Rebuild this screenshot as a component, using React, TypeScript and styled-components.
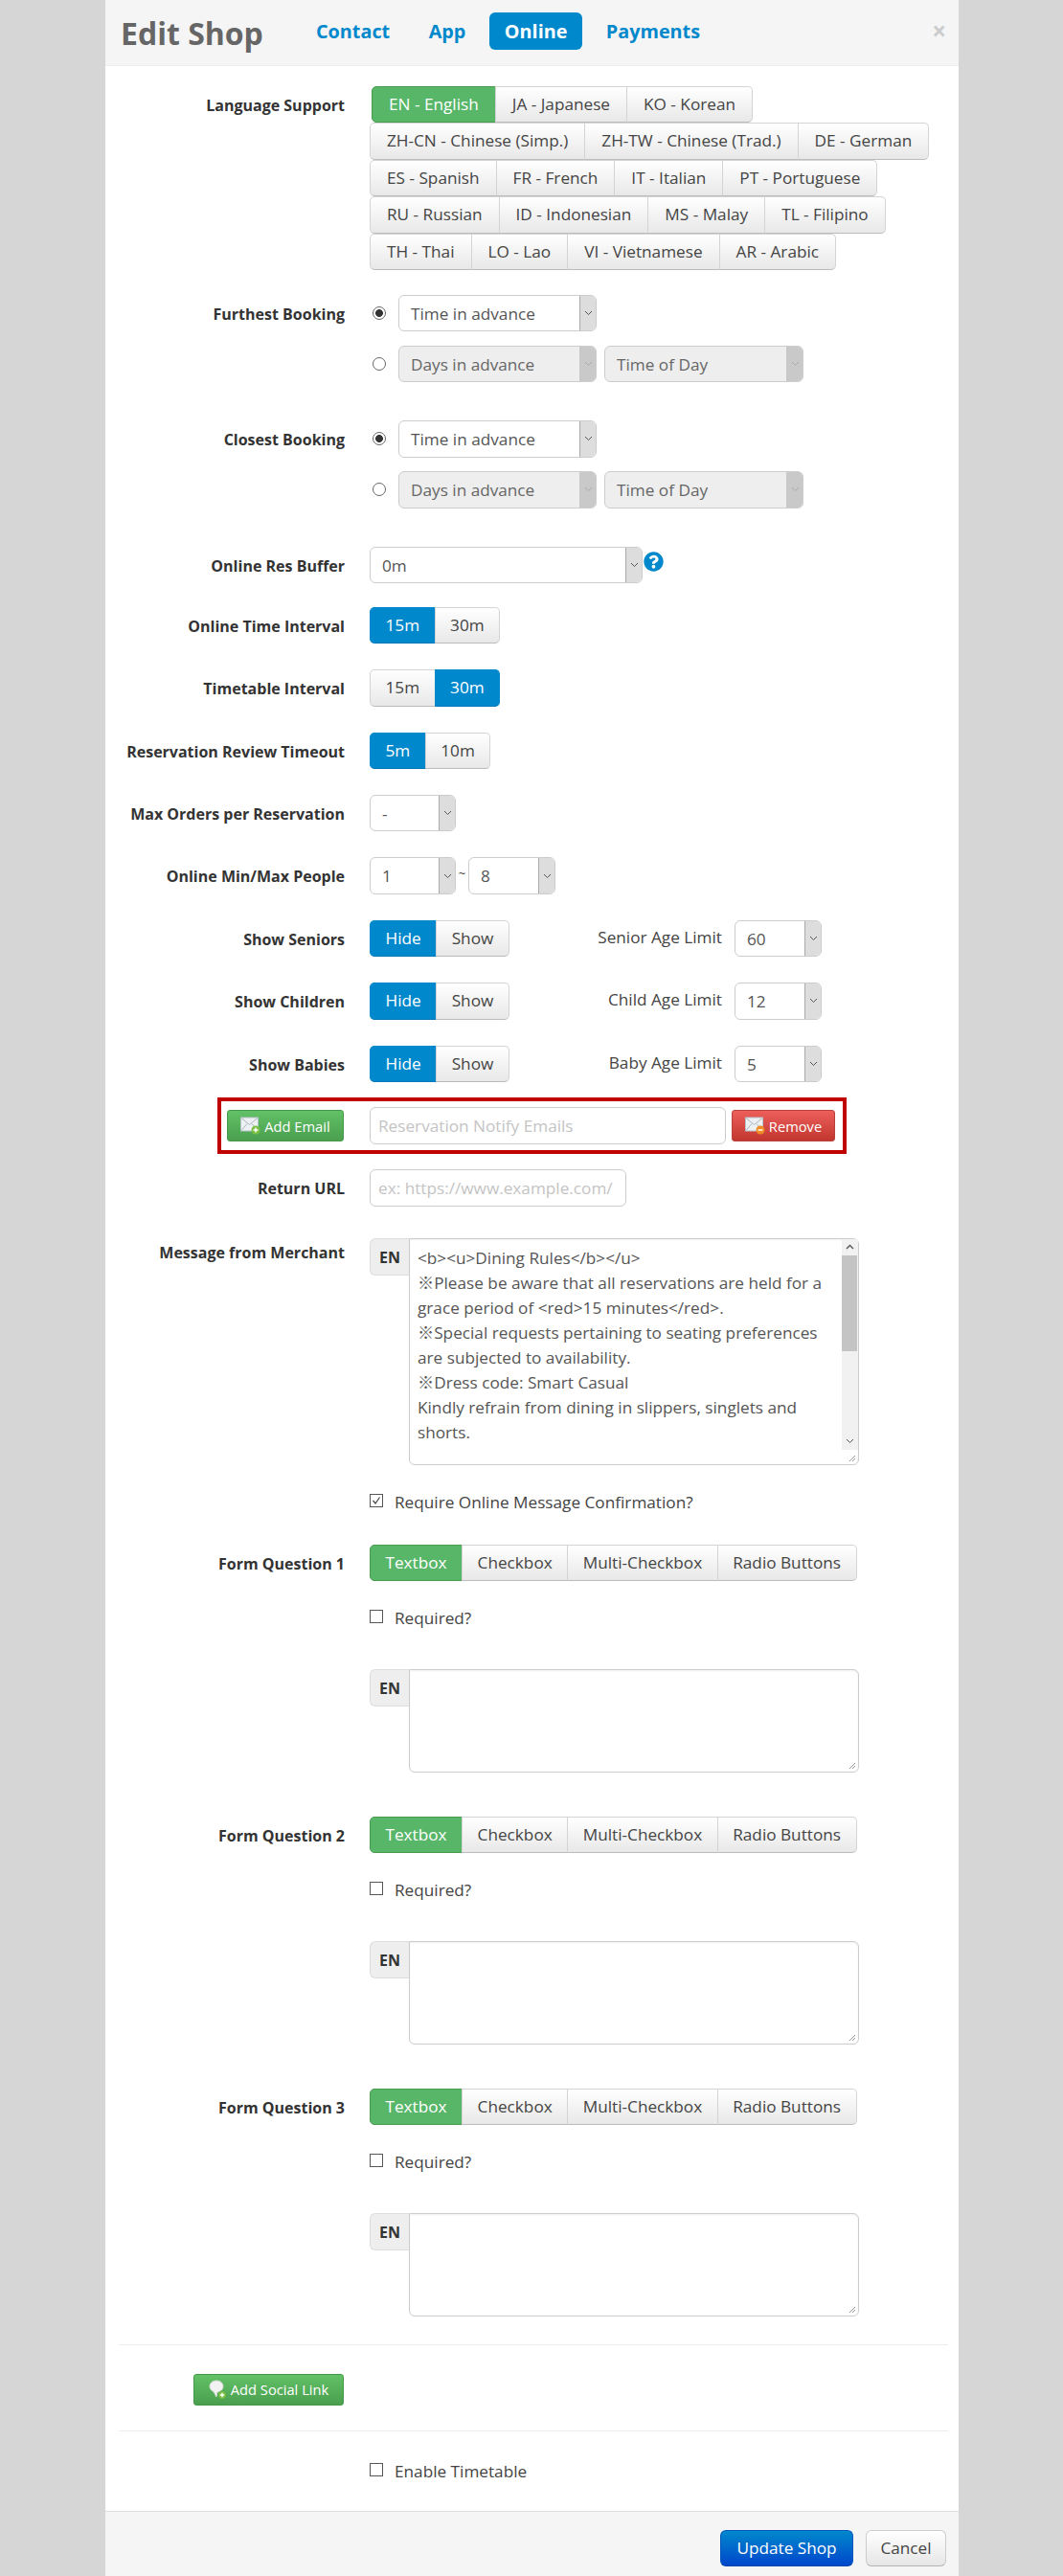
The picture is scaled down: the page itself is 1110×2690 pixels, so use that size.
import React from 'react';
import styled, { createGlobalStyle } from 'styled-components';
import { FaQuestionCircle } from 'react-icons/fa';

const fontStack = '"Open Sans", "Noto Sans CJK JP", "Liberation Sans", sans-serif';

const GlobalStyle = createGlobalStyle`
  html, body {
    margin: 0;
    padding: 0;
    background: #d6d6d6;
  }
  * {
    box-sizing: border-box;
  }
  body {
    font-family: ${fontStack};
    font-size: 17.2px;
    color: #444;
  }
`;

const Page = styled.div`
  width: 1110px;
  height: 2690px;
  overflow: hidden;
  padding-left: 110px;
`;

const Modal = styled.div`
  width: 891px;
  height: 2690px;
  background: #fff;
  display: flex;
  flex-direction: column;
`;

const Header = styled.header`
  height: 69px;
  flex: none;
  background: #f5f5f5;
  border-bottom: 1px solid #eee;
  display: flex;
  align-items: center;
  padding-left: 16px;
  padding-right: 16px;
`;

const Title = styled.h1`
  margin: 2px 38px 0 0;
  font-size: 32px;
  line-height: 40px;
  font-weight: 700;
  color: #666;
  width: 150px;
  white-space: nowrap;
`;

const Tabs = styled.nav`
  display: flex;
  align-items: center;
  gap: 8.5px;
  flex: 1;
`;

const Tab = styled.a<{ $active?: boolean }>`
  height: 39px;
  line-height: 39px;
  margin-top: -3px;
  padding: 0 16px;
  border-radius: 6px;
  font-size: 19.8px;
  font-weight: 700;
  color: ${p => (p.$active ? '#fff' : '#0088cc')};
  background: ${p => (p.$active ? '#0088cc' : 'transparent')};
`;

const Close = styled.span`
  font-size: 26px;
  font-weight: 700;
  color: #ccc;
  margin-top: -4px;
  margin-right: -3px;
`;

const Body = styled.div`
  flex: 1;
  padding-top: 21px;
`;

const Row = styled.div<{ $mt?: number }>`
  display: flex;
  align-items: flex-start;
  margin-top: ${p => p.$mt ?? 0}px;
`;

const Label = styled.label<{ $tight?: boolean }>`
  width: 250px;
  flex: none;
  height: 38px;
  line-height: ${p => (p.$tight ? 30 : 40)}px;
  text-align: right;
  font-weight: 700;
  font-size: 16px;
  color: #333;
  margin-right: 26px;
  white-space: nowrap;
`;

const Controls = styled.div`
  display: flex;
  flex-direction: column;
`;

const LangRow = styled.div<{ $first?: boolean }>`
  display: flex;
  height: 38.4px;
  margin-left: ${p => (p.$first ? 2 : 0)}px;
`;

const SegButton = styled.span<{ $on?: 'green' | 'blue'; $pad?: number }>`
  display: block;
  height: 100%;
  line-height: 35px;
  padding: 0 ${p => p.$pad ?? 17}px;
  white-space: nowrap;
  color: ${p => (p.$on ? '#fff' : '#444')};
  border: 1px solid ${p => (p.$on === 'green' ? '#4a9a4e' : p.$on === 'blue' ? '#0088cc' : '#d4d4d4')};
  border-bottom-color: ${p => (p.$on === 'green' ? '#4a9a4e' : p.$on === 'blue' ? '#0078b8' : '#bbb')};
  margin-left: -1px;
  background: ${p =>
    p.$on === 'green'
      ? '#57b668'
      : p.$on === 'blue'
        ? '#0088cc'
        : 'linear-gradient(#ffffff, #e8e8e8)'};
  &:first-child {
    margin-left: 0;
    border-radius: 5px 0 0 5px;
  }
  &:last-child {
    border-radius: 0 5px 5px 0;
  }
`;

const SegGroup = styled.div<{ $w?: number }>`
  display: flex;
  height: 38.4px;
  flex: none;
  width: ${p => (p.$w ? `${p.$w}px` : 'auto')};
`;

const BookingLine = styled.div<{ $mt?: number }>`
  display: flex;
  align-items: center;
  gap: 8px;
  height: 38.4px;
  margin-top: ${p => p.$mt ?? 0}px;
`;

const Radio = styled.span<{ $checked?: boolean }>`
  width: 14px;
  height: 14px;
  flex: none;
  margin-left: 3px;
  margin-right: 5px;
  border-radius: 50%;
  border: 1px solid #666;
  background: ${p => (p.$checked ? 'radial-gradient(circle, #333 0 3.6px, #fff 4.2px)' : '#fff')};
`;

const SelectBox = styled.div<{ $w: number; $disabled?: boolean }>`
  width: ${p => p.$w}px;
  height: 38.4px;
  flex: none;
  display: flex;
  border: 1px solid #ccc;
  border-radius: 6px;
  overflow: hidden;
  background: ${p => (p.$disabled ? '#eeeeee' : '#fff')};
  color: ${p => (p.$disabled ? '#666' : '#555')};
`;

const SelectValue = styled.span`
  flex: 1;
  line-height: 37px;
  padding-left: 12px;
  white-space: nowrap;
  overflow: hidden;
`;

const SelectArrow = styled.span<{ $disabled?: boolean }>`
  width: 17px;
  flex: none;
  display: flex;
  align-items: center;
  justify-content: center;
  background: ${p => (p.$disabled ? '#c9c9c9' : '#dddddd')};
  border-left: 1px solid ${p => (p.$disabled ? '#c9c9c9' : '#aaa')};
  color: ${p => (p.$disabled ? '#aaa' : '#555')};
`;

const Tilde = styled.span`
  width: 13px;
  text-align: center;
  line-height: 34px;
  font-size: 13px;
`;

const HelpIcon = styled.span`
  color: #0088cc;
  display: flex;
  height: 38px;
  align-items: center;
  margin-left: 1px;
  font-size: 21px;
  margin-top: -3px;
`;

const AgeLabel = styled.span`
  width: 223px;
  flex: none;
  text-align: right;
  line-height: 36px;
  margin-right: 13px;
  color: #444;
`;

const NotifyBox = styled.div`
  margin-top: 16px;
  margin-left: 117px;
  width: 657px;
  height: 59px;
  border: 4px solid #c00000;
  display: flex;
  align-items: center;
  padding-left: 6px;
`;

const IconButton = styled.span<{ $red?: boolean; $w: number; $ml?: number }>`
  width: ${p => p.$w}px;
  margin-left: ${p => p.$ml ?? 0}px;
  height: 33px;
  flex: none;
  display: flex;
  align-items: center;
  justify-content: center;
  gap: 4px;
  border-radius: 3px;
  font-size: 14.7px;
  color: #fff;
  white-space: nowrap;
  border: 1px solid ${p => (p.$red ? '#b9403b' : '#46994b')};
  background: ${p =>
    p.$red ? 'linear-gradient(#ec5f5b, #c2362f)' : 'linear-gradient(#62c166, #4a9f4f)'};
`;

const TextInput = styled.input<{ $w: number; $ml?: number }>`
  width: ${p => p.$w}px;
  height: 39px;
  flex: none;
  margin-left: ${p => p.$ml ?? 0}px;
  padding: 0 8px;
  border: 1px solid #ccc;
  border-radius: 6px;
  font-family: ${fontStack};
  font-size: 17.2px;
  outline: none;
  &::placeholder {
    color: #c4c4c4;
    opacity: 1;
  }
`;

const TextAreaGroup = styled.div`
  display: flex;
  align-items: flex-start;
`;

const LangAddon = styled.span`
  width: 41px;
  height: 39px;
  flex: none;
  line-height: 38px;
  text-align: center;
  font-weight: 700;
  font-size: 16px;
  color: #333;
  background: #eeeeee;
  border: 1px solid #ddd;
  border-right: none;
  border-radius: 6px 0 0 6px;
`;

const TextArea = styled.div<{ $h: number }>`
  position: relative;
  width: 470px;
  height: ${p => p.$h}px;
  display: flex;
  border: 1px solid #ccc;
  border-radius: 0 6px 6px 6px;
  box-shadow: inset 0 1px 2px rgba(0, 0, 0, 0.06);
`;

const AreaText = styled.div`
  flex: 1;
  padding: 7px 10px 0 8px;
  line-height: 26px;
  color: #555;
`;

const ScrollBar = styled.div`
  width: 17px;
  height: 220px;
  flex: none;
  background: #f1f1f1;
  display: flex;
  flex-direction: column;
  align-items: center;
  justify-content: space-between;
  color: #555;
  padding: 5px 0 6px;
`;

const ScrollThumb = styled.div`
  position: absolute;
  right: 1px;
  top: 17px;
  width: 16px;
  height: 100px;
  background: #c4c4c4;
`;

const Grip = styled.svg`
  position: absolute;
  right: 2px;
  bottom: 2px;
`;

const CheckLine = styled.div<{ $mt?: number }>`
  display: flex;
  align-items: center;
  height: 20px;
  margin-top: ${p => p.$mt ?? 0}px;
  margin-left: 276px;
  gap: 12px;
`;

const CheckBox = styled.span`
  width: 14px;
  height: 14px;
  flex: none;
  margin-top: -3px;
  border: 1px solid #555;
  background: #fff;
  display: flex;
  align-items: center;
  justify-content: center;
`;

const AreaLine = styled.div<{ $mt?: number }>`
  margin-left: 276px;
  margin-top: ${p => p.$mt ?? 0}px;
`;

const Divider = styled.hr<{ $mt: number }>`
  margin: ${p => p.$mt}px 11px 0 14px;
  border: none;
  border-top: 1px solid #eee;
`;

const SocialRow = styled.div`
  margin-top: 30px;
  margin-left: 92px;
`;

const Footer = styled.footer`
  height: 68px;
  flex: none;
  background: #f5f5f5;
  border-top: 1px solid #ddd;
  display: flex;
  justify-content: flex-end;
  gap: 13px;
  padding: 19px 13px 0 0;
`;

const FooterButton = styled.span<{ $primary?: boolean; $w: number }>`
  width: ${p => p.$w}px;
  height: 38px;
  line-height: 36px;
  text-align: center;
  border-radius: 6px;
  color: ${p => (p.$primary ? '#fff' : '#444')};
  border: 1px solid ${p => (p.$primary ? '#0055bb' : '#ccc')};
  border-bottom-color: ${p => (p.$primary ? '#0044aa' : '#b3b3b3')};
  background: ${p =>
    p.$primary ? 'linear-gradient(#0088cc, #0047cc)' : 'linear-gradient(#ffffff, #e6e6e6)'};
`;

const languages = [
  ['EN - English', 'JA - Japanese', 'KO - Korean'],
  ['ZH-CN - Chinese (Simp.)', 'ZH-TW - Chinese (Trad.)', 'DE - German'],
  ['ES - Spanish', 'FR - French', 'IT - Italian', 'PT - Portuguese'],
  ['RU - Russian', 'ID - Indonesian', 'MS - Malay', 'TL - Filipino'],
  ['TH - Thai', 'LO - Lao', 'VI - Vietnamese', 'AR - Arabic'],
];

const Chevron: React.FC = () => (
  <svg width="9" height="6" viewBox="0 0 9 6" fill="none" stroke="currentColor" strokeWidth="1">
    <path d="M1 1l3.5 3.5L8 1" />
  </svg>
);

const Select: React.FC<{ w: number; value: string; disabled?: boolean }> = ({ w, value, disabled }) => (
  <SelectBox $w={w} $disabled={disabled}>
    <SelectValue>{value}</SelectValue>
    <SelectArrow $disabled={disabled}>
      <Chevron />
    </SelectArrow>
  </SelectBox>
);

const Toggle: React.FC<{ left: string; right: string; on: 0 | 1; w?: number }> = ({ left, right, on, w }) => (
  <SegGroup $w={w}>
    <SegButton $on={on === 0 ? 'blue' : undefined} $pad={15.5}>
      {left}
    </SegButton>
    <SegButton $on={on === 1 ? 'blue' : undefined} $pad={15.5}>
      {right}
    </SegButton>
  </SegGroup>
);

const MailIcon: React.FC<{ badge: string; minus?: boolean }> = ({ badge, minus }) => (
  <svg width="21" height="19" viewBox="0 0 21 19">
    <rect x="0.5" y="1" width="18" height="14" fill="#eef1f3" stroke="#b8c4cc" />
    <path d="M1 1.5l8.5 7 8.5-7M1 14.5l6-7M18 14.5l-6-7" fill="none" stroke="#a9b6bf" />
    <circle cx="16" cy="14" r="4.5" fill={badge} />
    <path d={minus ? 'M13.5 14h5' : 'M13.5 14h5M16 11.5v5'} stroke="#fff" strokeWidth="1.4" />
  </svg>
);

const BubbleIcon: React.FC = () => (
  <svg width="19" height="21" viewBox="0 0 19 21">
    <path d="M8 1c4 0 7 2.4 7 6s-3 6-6 6l-1 5-3-5.6C2.500 11.400 1 9.500 1 7c0-3.600 3-6 7-6z" fill="#f2f2f2" stroke="#cfd8cf" />
    <circle cx="14" cy="16" r="4.200" fill="#7ac143" stroke="#4a9f4f" strokeWidth="0.5" />
    <path d="M11.800 16h4.400M14 13.800v4.400" stroke="#fff" strokeWidth="1.300" />
  </svg>
);

const Check: React.FC<{ checked?: boolean; children: React.ReactNode; mt?: number }> = ({ checked, children, mt }) => (
  <CheckLine $mt={mt}>
    <CheckBox>
      {checked && (
        <svg width="10" height="10" viewBox="0 0 10 10" fill="none" stroke="#444" strokeWidth="1.2">
          <path d="M1.500 5l2.500 3 4.500-6.500" />
        </svg>
      )}
    </CheckBox>
    <span>{children}</span>
  </CheckLine>
);

const Booking: React.FC<{ label: string; mt: number }> = ({ label, mt }) => (
  <Row $mt={mt}>
    <Label>{label}</Label>
    <Controls>
      <BookingLine>
        <Radio $checked />
        <Select w={207} value="Time in advance" />
      </BookingLine>
      <BookingLine $mt={14.5}>
        <Radio />
        <Select w={207} value="Days in advance" disabled />
        <Select w={208} value="Time of Day" disabled />
      </BookingLine>
    </Controls>
  </Row>
);

const AgeRow: React.FC<{ label: string; age: string; value: string }> = ({ label, age, value }) => (
  <Row $mt={27}>
    <Label>{label}</Label>
    <Toggle left="Hide" right="Show" on={0} w={145} />
    <AgeLabel>{age}</AgeLabel>
    <Select w={91} value={value} />
  </Row>
);

const FormQuestion: React.FC<{ n: number; mt: number }> = ({ n, mt }) => (
  <>
    <Row $mt={mt}>
      <Label>Form Question {n}</Label>
      <SegGroup>
        <SegButton $on="green" $pad={15.5}>
          Textbox
        </SegButton>
        <SegButton $pad={15.5}>Checkbox</SegButton>
        <SegButton $pad={15.5}>Multi-Checkbox</SegButton>
        <SegButton $pad={15.5}>Radio Buttons</SegButton>
      </SegGroup>
    </Row>
    <Check mt={28.5}>Required?</Check>
    <AreaLine $mt={43}>
      <TextAreaGroup>
        <LangAddon>EN</LangAddon>
        <TextArea $h={108}>
          <Grip width="9" height="9" viewBox="0 0 9 9" stroke="#999">
            <path d="M8 2L2 8M8 5L5 8" />
          </Grip>
        </TextArea>
      </TextAreaGroup>
    </AreaLine>
  </>
);

export default function App() {
  return (
    <Page>
      <GlobalStyle />
      <Modal>
        <Header>
          <Title>Edit Shop</Title>
          <Tabs>
            <Tab>Contact</Tab>
            <Tab>App</Tab>
            <Tab $active>Online</Tab>
            <Tab>Payments</Tab>
          </Tabs>
          <Close>×</Close>
        </Header>
        <Body>
          <Row>
            <Label>Language Support</Label>
            <Controls>
              {languages.map((row, i) => (
                <LangRow key={row[0]} $first={i === 0}>
                  {row.map((lang, j) => (
                    <SegButton key={lang} $on={i === 0 && j === 0 ? 'green' : undefined}>
                      {lang}
                    </SegButton>
                  ))}
                </LangRow>
              ))}
            </Controls>
          </Row>

          <Booking label="Furthest Booking" mt={26} />
          <Booking label="Closest Booking" mt={40} />

          <Row $mt={40}>
            <Label>Online Res Buffer</Label>
            <Select w={285} value="0m" />
            <HelpIcon>
              <FaQuestionCircle />
            </HelpIcon>
          </Row>
          <Row $mt={25}>
            <Label>Online Time Interval</Label>
            <Toggle left="15m" right="30m" on={0} />
          </Row>
          <Row $mt={27}>
            <Label>Timetable Interval</Label>
            <Toggle left="15m" right="30m" on={1} />
          </Row>
          <Row $mt={27}>
            <Label>Reservation Review Timeout</Label>
            <Toggle left="5m" right="10m" on={0} />
          </Row>
          <Row $mt={27}>
            <Label>Max Orders per Reservation</Label>
            <Select w={90} value="-" />
          </Row>
          <Row $mt={27}>
            <Label>Online Min/Max People</Label>
            <Select w={90} value="1" />
            <Tilde>~</Tilde>
            <Select w={91} value="8" />
          </Row>
          <AgeRow label="Show Seniors" age="Senior Age Limit" value="60" />
          <AgeRow label="Show Children" age="Child Age Limit" value="12" />
          <AgeRow label="Show Babies" age="Baby Age Limit" value="5" />

          <NotifyBox>
            <IconButton $w={122}>
              <MailIcon badge="#7ac143" />
              Add Email
            </IconButton>
            <TextInput $w={372} $ml={27} placeholder="Reservation Notify Emails" />
            <IconButton $red $w={108} $ml={6}>
              <MailIcon badge="#f08a24" minus />
              Remove
            </IconButton>
          </NotifyBox>

          <Row $mt={16}>
            <Label>Return URL</Label>
            <TextInput $w={268} placeholder="ex: https://www.example.com/" />
          </Row>
          <Row $mt={33}>
            <Label $tight>Message from Merchant</Label>
            <TextAreaGroup>
              <LangAddon>EN</LangAddon>
              <TextArea $h={237}>
                <AreaText>
                  {'<b><u>Dining Rules</b></u>'}
                  <br />
                  ※Please be aware that all reservations are held for a grace period of {'<red>15 minutes</red>'}.
                  <br />
                  ※Special requests pertaining to seating preferences are subjected to availability.
                  <br />
                  ※Dress code: Smart Casual
                  <br />
                  Kindly refrain from dining in slippers, singlets and shorts.
                </AreaText>
                <ScrollBar>
                  <svg width="9" height="6" viewBox="0 0 9 6" fill="none" stroke="currentColor" strokeWidth="1.400">
                    <path d="M1 5l3.500-3.500L8 5" />
                  </svg>
                  <Chevron />
                </ScrollBar>
                <ScrollThumb />
                <Grip width="9" height="9" viewBox="0 0 9 9" stroke="#999">
                  <path d="M8 2L2 8M8 5L5 8" />
                </Grip>
              </TextArea>
            </TextAreaGroup>
          </Row>
          <Check checked mt={28}>
            Require Online Message Confirmation?
          </Check>

          <FormQuestion n={1} mt={35} />
          <FormQuestion n={2} mt={46} />
          <FormQuestion n={3} mt={46} />

          <Divider $mt={29} />
          <SocialRow>
            <IconButton $w={157}>
              <BubbleIcon />
              Add Social Link
            </IconButton>
          </SocialRow>
          <Divider $mt={26} />
          <Check mt={32}>Enable Timetable</Check>
        </Body>
        <Footer>
          <FooterButton $primary $w={139}>
            Update Shop
          </FooterButton>
          <FooterButton $w={84}>Cancel</FooterButton>
        </Footer>
      </Modal>
    </Page>
  );
}
